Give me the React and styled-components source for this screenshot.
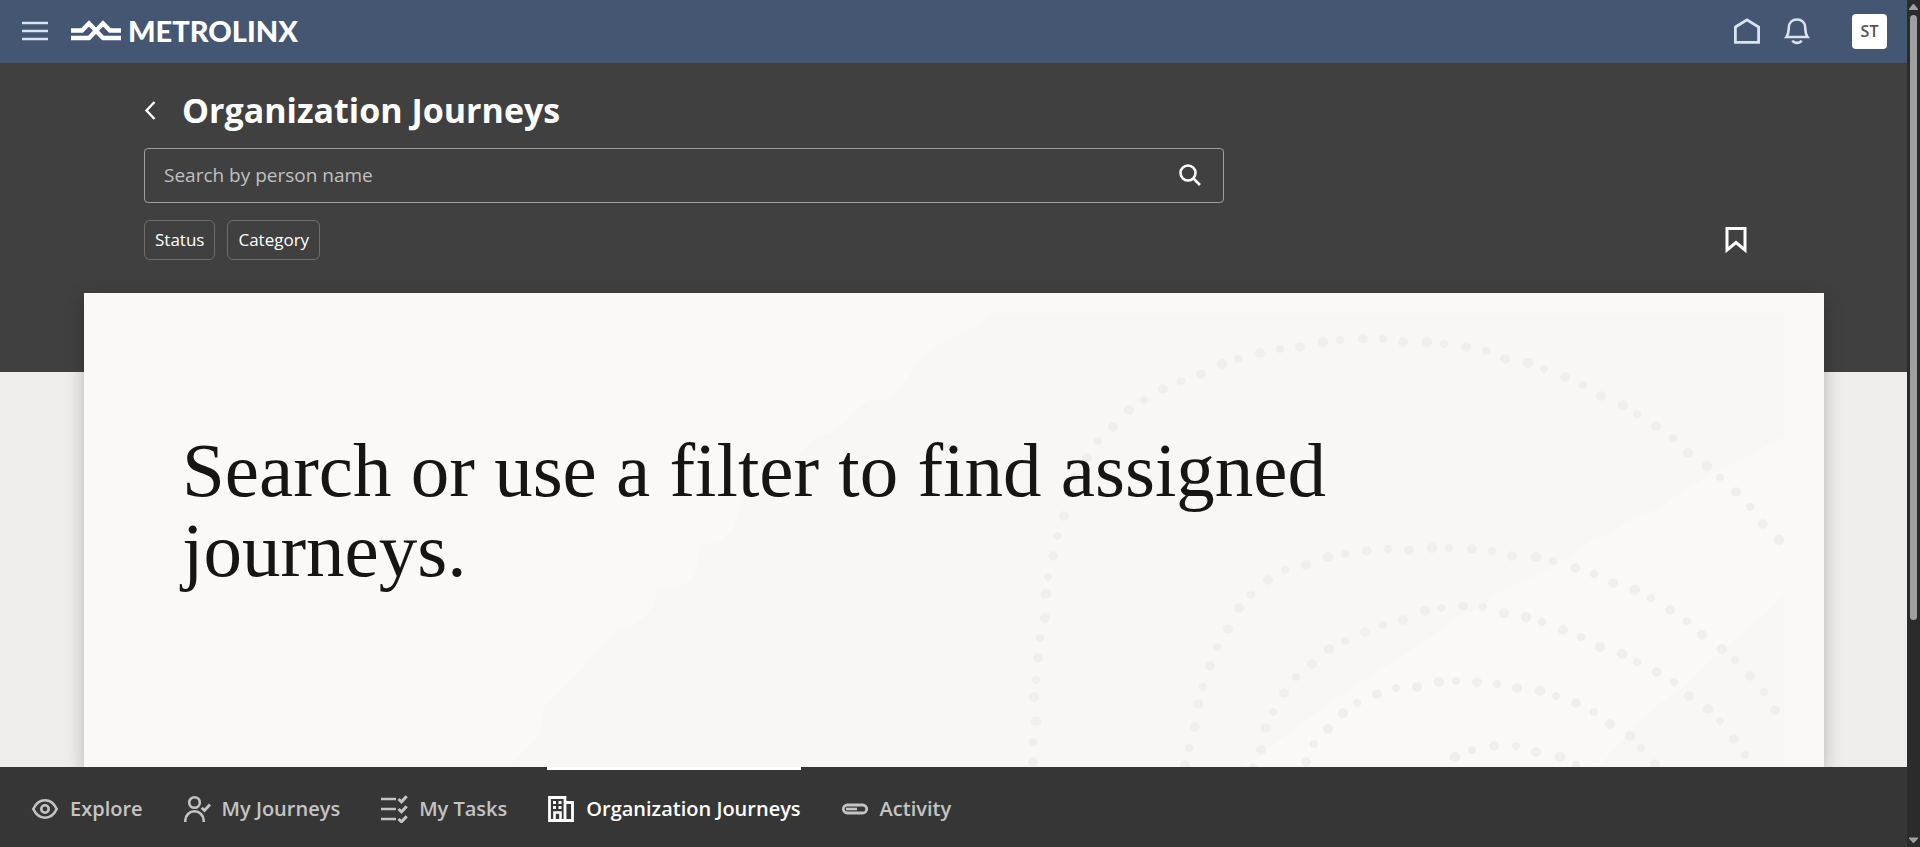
import React from "react";
import styled, { createGlobalStyle } from "styled-components";

const GlobalStyle = createGlobalStyle`
  *, *::before, *::after { box-sizing: border-box; }
  body { margin: 0; background: #efeeec; font-family: "Open Sans", "Noto Sans", sans-serif; }
  button, input { font-family: inherit; }
`;

const Shell = styled.div`
  display: grid;
  grid-template-columns: minmax(0, 1fr) 13px;
  height: 100vh;
  overflow: hidden;
`;

const Page = styled.div`
  display: flex;
  flex-direction: column;
  min-height: 0;
`;

const TopBar = styled.header`
  display: flex;
  align-items: center;
  flex: none;
  height: 63px;
  padding: 0 20px 1px;
  background: #455672;
  color: #d9e3f2;
`;

const IconButton = styled.button`
  display: flex;
  align-items: center;
  justify-content: center;
  flex: none;
  width: ${(p) => p.$width || 32}px;
  height: 40px;
  padding: 0;
  border: 0;
  background: none;
  color: inherit;
  cursor: pointer;
`;

const Brand = styled.a`
  display: flex;
  align-items: center;
  gap: 6px;
  margin: 0 auto 0 20px;
  color: #fff;
  font: 900 29px/30px Lato, "Open Sans", sans-serif;
  text-decoration: none;
`;

const TopActions = styled.div`
  display: flex;
  align-items: center;
  gap: 18px;
`;

const Avatar = styled.button`
  width: 35px;
  height: 35px;
  margin-left: 21px;
  padding: 0;
  border: 0;
  border-radius: 4px;
  background: #fff;
  color: #55534f;
  font-size: 16px;
  font-weight: 600;
  line-height: 24px;
`;

const Content = styled.main`
  display: flex;
  flex-direction: column;
  flex: 1;
  min-height: 0;
  overflow: hidden;
`;

const Hero = styled.section`
  flex: none;
  height: 309px;
  padding: 25px 144px 0;
  background: #404040;
  color: #fff;
`;

const TitleRow = styled.div`
  display: flex;
  align-items: center;
  gap: 26px;
  height: 44px;
`;

const Title = styled.h1`
  margin: 0;
  font-size: 34px;
  font-weight: 700;
  line-height: 44px;
`;

const SearchBox = styled.form`
  display: flex;
  align-items: center;
  max-width: 1080px;
  height: 55px;
  margin-top: 16px;
  padding: 0 13px 2px 19px;
  border: 1px solid #9e9e9e;
  border-radius: 4px;
`;

const SearchInput = styled.input`
  flex: 1;
  min-width: 0;
  padding: 0;
  border: 0;
  outline: 0;
  background: none;
  color: #fff;
  font-size: 19px;
  line-height: 28px;
  &::placeholder { color: #c0c0c0; opacity: 1; }
`;

const FilterRow = styled.div`
  display: flex;
  align-items: center;
  justify-content: space-between;
  margin-top: 17px;
`;

const Chips = styled.div`
  display: flex;
  gap: 12px;
`;

const Chip = styled.button`
  height: 40px;
  padding: 0 10px;
  border: 1px solid #6e6e6e;
  border-radius: 6px;
  background: none;
  color: #fff;
  font-size: 17px;
  font-weight: 500;
  line-height: 24px;
`;

const Card = styled.section`
  position: relative;
  flex: 1;
  margin: -79px 83px 0 84px;
  padding: 137px 98px 0;
  background: #fbf9f8;
  box-shadow: 0 6px 18px rgba(0, 0, 0, 0.24);
`;

const Artwork = styled.svg`
  position: absolute;
  top: 20px;
  right: 40px;
  width: 1284px;
  max-width: calc(100% - 40px);
  height: calc(100% - 20px);
`;

const EmptyMessage = styled.h2`
  position: relative;
  max-width: 1240px;
  margin: 0;
  color: #161513;
  font: 400 77px/80px "Liberation Serif", serif;
`;

const BottomNav = styled.nav`
  position: relative;
  display: flex;
  flex: none;
  gap: 40px;
  height: 80px;
  padding-left: 31px;
  background: #363636;
`;

const NavItem = styled.a`
  display: flex;
  align-items: center;
  gap: 11px;
  padding-top: 1px;
  border-top: 3px solid ${(p) => (p.$active ? "#fff" : "transparent")};
  color: ${(p) => (p.$active ? "#fff" : "#c4c4c4")};
  font-size: 20px;
  font-weight: 600;
  line-height: 28px;
  text-decoration: none;
  white-space: nowrap;
`;

const ScrollTrack = styled.div`
  display: flex;
  flex-direction: column;
  align-items: center;
  padding: 4px 0 3px;
  background: #2b2b2b;
`;

const ScrollThumb = styled.div`
  flex: 0 0 72%;
  width: 7px;
  margin: 4px 0 auto;
  border-radius: 4px;
  background: #9f9f9f;
`;

const Icon = ({ width = 28, height = 28, stroke = 2.6, children }) => (
  <svg
    width={width}
    height={height}
    viewBox={`0 0 ${width} ${height}`}
    fill="none"
    stroke="currentColor"
    strokeWidth={stroke}
    aria-hidden="true"
  >
    {children}
  </svg>
);

const navItems = [
  {
    label: "Explore",
    icon: (
      <>
        <path d="M2.3 14C5 8.3 8.500 5.300 14 5.300S23 8.300 25.700 14C23 19.700 19.500 22.700 14 22.700S5 19.700 2.300 14Z" />
        <circle cx="14" cy="14" r="3.700" />
      </>
    ),
  },
  {
    label: "My Journeys",
    icon: (
      <>
        <circle cx="11.5" cy="7.5" r="5.3" />
        <path d="M2.300 27v-1.500a9.200 9.200 0 0 1 18.400 0V27" />
        <path d="M18.700 12.700l2.800 2.800 5.500-6" strokeWidth="2.900" />
      </>
    ),
  },
  {
    label: "My Tasks",
    icon: (
      <>
        <path d="M1 4h15M1 14h15M1 24h15" />
        <path
          d="M18.500 4l3 2.800 5.200-5.600M18.500 14l3 2.800 5.200-5.600M18.500 24l3 2.800 5.200-5.600"
          strokeWidth="3"
        />
      </>
    ),
  },
  {
    label: "Organization Journeys",
    active: true,
    icon: (
      <>
        <path d="M2.500 2.500h15.500v23H2.500zM18 7.500h7.500v18H18" strokeWidth="2.800" />
        <path d="M7.500 25v-7.500h6V25" />
        <path d="M6 7.500h3M11.500 7.500h3M6 12.500h3M11.500 12.500h3" strokeWidth="3" />
      </>
    ),
  },
  {
    label: "Activity",
    icon: (
      <>
        <rect x="2.300" y="10" width="23.400" height="8" rx="4" strokeWidth="2.800" />
        <path d="M5 14h11" />
      </>
    ),
  },
];

// Dot radii repeat every five dots along an arc; `phase` shifts the largest one.
const dotRadii = [5.4, 4.3, 5, 4.3, 5.1];

const dotArcs = [
  {
    phase: 3,
    dots: [
      [1033, 762], [1033, 742], [1036, 721], [1034, 697], [1036, 680], [1038, 658], [1040, 638],
      [1045, 618], [1046, 594], [1048, 577], [1053, 556], [1057, 536], [1064, 516], [1070, 493],
      [1075, 477], [1087, 458], [1098, 441], [1113, 427], [1129, 410], [1144, 400], [1163, 389],
      [1181, 381], [1201, 374], [1222, 364], [1238, 359], [1260, 353], [1280, 349], [1300, 347],
      [1323, 342], [1340, 340], [1363, 339], [1383, 339], [1403, 342], [1427, 342], [1444, 344],
      [1466, 347], [1486, 351], [1505, 359], [1528, 363], [1544, 369], [1565, 377], [1583, 385],
      [1601, 396], [1623, 405], [1637, 414], [1656, 426], [1673, 438], [1688, 453], [1707, 466],
      [1720, 477], [1736, 492], [1750, 507], [1763, 524], [1779, 540],
    ],
  },
  {
    phase: 3,
    dots: [
      [1185, 765], [1189, 748], [1195, 727], [1198, 704], [1203, 687], [1210, 666], [1217, 647],
      [1228, 629], [1239, 608], [1251, 595], [1268, 580], [1285, 570], [1306, 565], [1328, 557],
      [1345, 554], [1367, 551], [1388, 549], [1409, 550], [1432, 548], [1449, 548], [1472, 549],
      [1492, 551], [1512, 556], [1536, 557], [1553, 561], [1575, 568], [1594, 574], [1613, 583],
      [1635, 590], [1651, 598], [1670, 610], [1687, 621], [1702, 635], [1722, 649], [1735, 660],
      [1750, 676], [1764, 692], [1775, 710],
    ],
  },
  {
    phase: 2,
    dots: [
      [1253, 767], [1261, 750], [1266, 728], [1273, 712], [1284, 693], [1296, 677], [1312, 664],
      [1329, 649], [1345, 641], [1365, 632], [1383, 625], [1403, 620], [1425, 611], [1441, 608],
      [1463, 606], [1483, 607], [1504, 613], [1526, 617], [1542, 622], [1563, 630], [1581, 637],
      [1600, 647], [1622, 654], [1637, 662], [1657, 672], [1674, 682], [1689, 696], [1708, 709],
      [1720, 721], [1734, 739], [1745, 755],
    ],
  },
  {
    phase: 3,
    dots: [
      [1306, 762], [1314, 744], [1328, 729], [1343, 713], [1357, 703], [1377, 694], [1396, 688],
      [1417, 687], [1439, 682], [1456, 681], [1477, 682], [1497, 684], [1517, 688], [1540, 691],
      [1556, 696], [1576, 703], [1594, 712], [1610, 724], [1630, 736], [1641, 748], [1655, 764],
    ],
  },
  {
    phase: 0,
    dots: [[1455, 757], [1472, 750], [1494, 746], [1516, 746], [1536, 752], [1560, 757], [1576, 765]],
  },
];

const CardArtwork = () => (
  <Artwork viewBox="500 313 1284 454" preserveAspectRatio="xMaxYMin slice" aria-hidden="true">
    <path
      fill="#f8f7f5"
      d="M508 767L539 735L544 707L580 670L603 643L617 630Q646 622 654 603L657 588Q690 590 696 570L700 545Q725 542 732 530L743 500L763 483L786 467L800 453L818 435L832 433L861 405L872 399L884 401L898 392L918 362Q935 343 960 335Q978 328 988 313H1784V437L1758 450L1720 470L1683 491L1660 508L1633 519L1607 534L1592 540L1570 557L1550 568L1513 586L1493 596L1480 607L1453 620L1433 636L1400 657L1360 683L1327 705L1293 730L1260 755L1242 767Z"
    />
    <path
      fill="#f8f7f5"
      d="M1784 593L1770 609L1757 620L1720 652L1693 678L1677 692L1657 705L1633 728L1613 750L1598 767H1784Z"
    />
    {dotArcs.map((arc, a) => (
      <g key={a} fill="#f1efed">
        {arc.dots.map(([x, y], i) => {
          const r = dotRadii[(i + 5 - arc.phase) % 5];
          return <ellipse key={i} cx={x} cy={y} rx={r} ry={r - 0.3} />;
        })}
      </g>
    ))}
  </Artwork>
);

const ScrollArrow = ({ down }) => (
  <svg width="9" height="7" viewBox="0 0 9 7" fill="#9f9f9f" aria-hidden="true">
    <path d={down ? "M0 1.500V.5h9v1L5 6H4Z" : "M4 0h1l4 5v1H0V5Z"} />
  </svg>
);

export default function App() {
  return (
    <>
      <GlobalStyle />
      <Shell>
        <Page>
          <TopBar>
            <IconButton type="button" aria-label="Open menu" $width={30}>
              <Icon width={26} height={20} stroke={2.6}>
                <path d="M0 2h26M0 10h26M0 18h26" />
              </Icon>
            </IconButton>
            <Brand href="#home">
              <Icon width={52} height={22} stroke={4.4}>
                <path d="M1 10.500H12L19 3.500L33 18H51M1 18H19L33 3.500L40 10.500H51" />
              </Icon>
              METROLINX
            </Brand>
            <TopActions>
              <IconButton type="button" aria-label="Home">
                <Icon stroke={2.8}>
                  <path d="M2.400 10L14 2.800L25.600 10V25.400H2.400Z" />
                </Icon>
              </IconButton>
              <IconButton type="button" aria-label="Notifications">
                <Icon>
                  <path d="M3.500 20C5.800 17 5.500 14 5.800 10.500C6 5.500 9.300 2.500 14 2.500S22 5.500 22.200 10.500C22.500 14 22.200 17 24.500 20Z" />
                  <path d="M9.500 23.500C11 26.700 17 26.700 18.500 23.500" />
                </Icon>
              </IconButton>
              <Avatar type="button" aria-label="Account ST">ST</Avatar>
            </TopActions>
          </TopBar>

          <Content>
            <Hero>
              <TitleRow>
                <IconButton type="button" aria-label="Back" $width={12}>
                  <Icon width={12} height={20} stroke={2.4}>
                    <path d="M10.500 2L2.500 10.500L10.500 19" />
                  </Icon>
                </IconButton>
                <Title>Organization Journeys</Title>
              </TitleRow>
              <SearchBox role="search">
                <SearchInput
                  type="text"
                  aria-label="Search by person name"
                  placeholder="Search by person name"
                />
                <IconButton type="button" aria-label="Search" $width={40}>
                  <Icon width={24} height={24} stroke={2.6}>
                    <circle cx="10" cy="10" r="7.500" />
                    <path d="M15.500 15.500L22 22" />
                  </Icon>
                </IconButton>
              </SearchBox>
              <FilterRow>
                <Chips>
                  <Chip type="button">Status</Chip>
                  <Chip type="button">Category</Chip>
                </Chips>
                <IconButton type="button" aria-label="Saved searches" $width={54}>
                  <Icon stroke={3}>
                    <path d="M5 2.500H23V24L14 16.500L5 24Z" />
                  </Icon>
                </IconButton>
              </FilterRow>
            </Hero>
            <Card>
              <CardArtwork />
              <EmptyMessage>Search or use a filter to find assigned journeys.</EmptyMessage>
            </Card>
          </Content>

          <BottomNav aria-label="Journeys">
            {navItems.map((item) => (
              <NavItem
                key={item.label}
                href="#"
                $active={item.active}
                aria-current={item.active ? "page" : undefined}
              >
                <Icon>{item.icon}</Icon>
                {item.label}
              </NavItem>
            ))}
          </BottomNav>
        </Page>
        <ScrollTrack aria-hidden="true">
          <ScrollArrow />
          <ScrollThumb />
          <ScrollArrow down />
        </ScrollTrack>
      </Shell>
    </>
  );
}
